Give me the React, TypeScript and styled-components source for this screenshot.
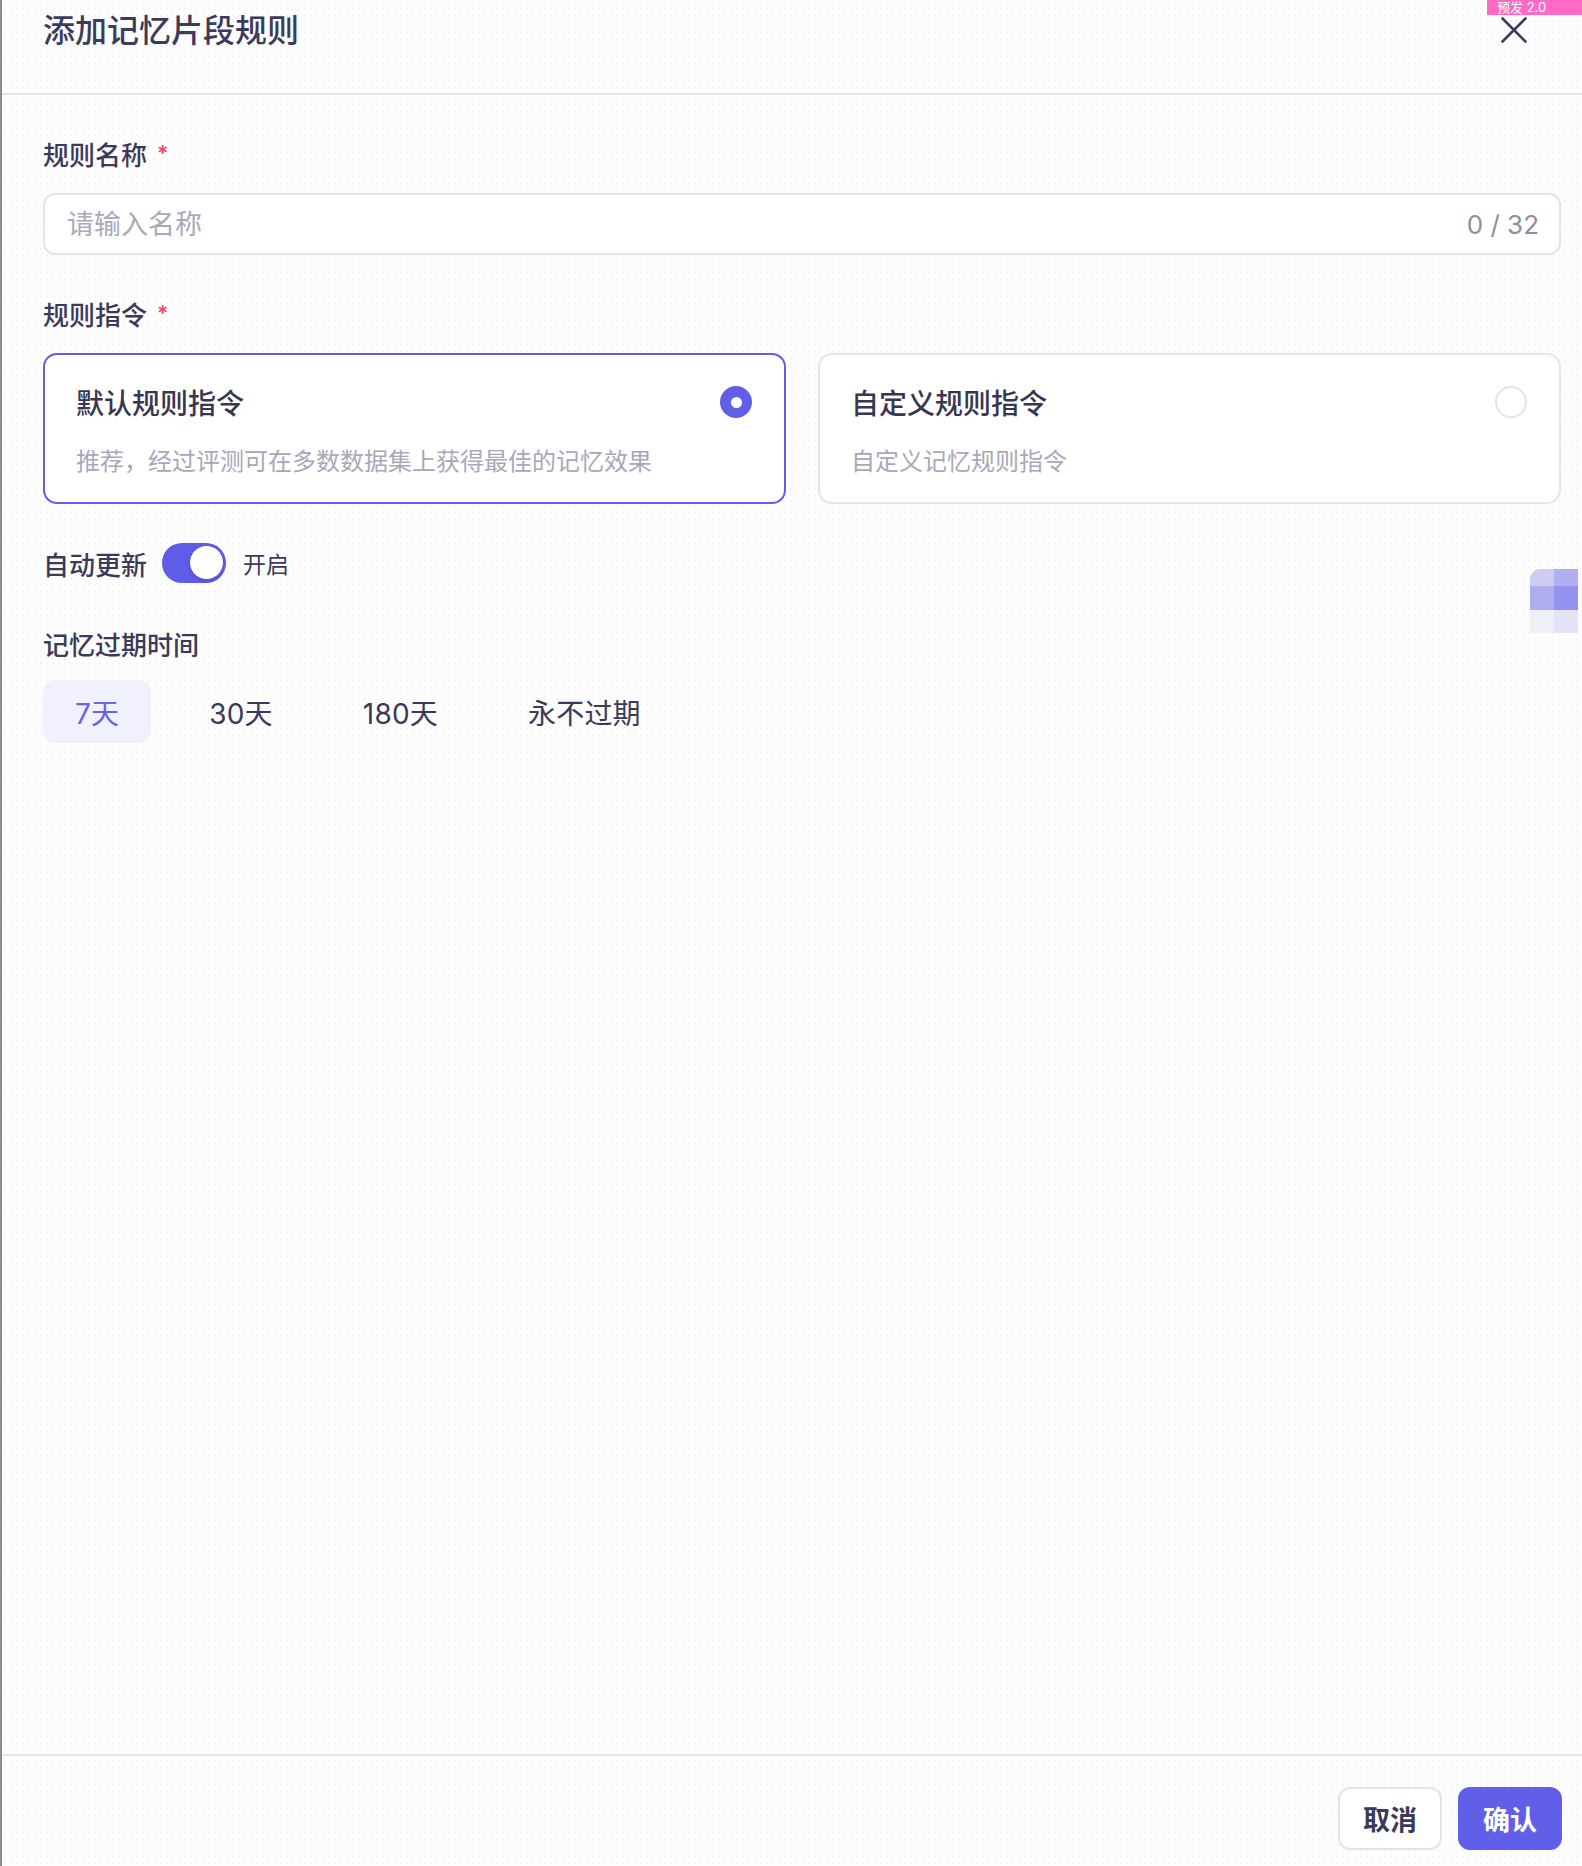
import React, { useState } from 'react';
import styled, { createGlobalStyle } from 'styled-components';

const GlobalStyle = createGlobalStyle`
  html, body {
    margin: 0;
    padding: 0;
    background: #fdfdfe;
  }
  * { box-sizing: border-box; }
  body {
    font-family: "Inter", "Noto Sans CJK SC", sans-serif;
    color: #3b3a58;
  }
`;

const Page = styled.div`
  position: relative;
  width: 1582px;
  height: 1866px;
  display: flex;
  flex-direction: column;
  border-left: 2px solid #8c8b92;
  background-color: #fdfdfe;
  background-image: radial-gradient(#f6f6f9 0.8px, transparent 0.9px);
  background-size: 6px 6px;
  overflow: hidden;
`;

const Header = styled.div`
  height: 95px;
  display: flex;
  justify-content: space-between;
  align-items: flex-start;
  padding: 13px 48px 0 41px;
  border-bottom: 2px solid #e6e5ee;
`;

const Title = styled.h1`
  margin: 0;
  font-size: 32px;
  line-height: 36px;
  font-weight: 500;
  color: #3d3b5c;
`;

const CloseButton = styled.button`
  width: 40px;
  height: 40px;
  margin-top: -3px;
  padding: 0;
  border: none;
  background: transparent;
  display: flex;
  align-items: center;
  justify-content: center;
  color: #3d3b5c;
  cursor: pointer;
`;

const EnvBadge = styled.div`
  position: absolute;
  top: 0;
  right: 0;
  width: 95px;
  height: 15px;
  background: #ff6ac6;
  color: #fff;
  font-size: 13px;
  line-height: 15px;
  padding-left: 10px;
  white-space: nowrap;
`;

const Body = styled.div`
  flex: 1;
  padding: 43px 21px 0 41px;
  display: flex;
  flex-direction: column;
`;

const Field = styled.div`
  margin-bottom: 43px;
`;

const Label = styled.div`
  font-size: 26px;
  line-height: 36px;
  font-weight: 500;
  color: #3b3a58;
  margin-bottom: 19px;
  display: flex;
  align-items: center;
`;

const Required = styled.span`
  color: #f5455c;
  font-size: 22px;
  margin-left: 10px;
  margin-top: -6px;
`;

const InputBox = styled.div`
  height: 62px;
  border: 2px solid #e4e3ec;
  border-radius: 12px;
  background: #fff;
  display: flex;
  align-items: center;
  padding: 0 20px 0 20px;
`;

const TextInput = styled.input`
  flex: 1;
  border: none;
  outline: none;
  background: transparent;
  font-family: "Inter", "Noto Sans CJK SC", sans-serif;
  font-size: 27px;
  color: #3b3a58;
  &::placeholder {
    color: #aaa8bb;
  }
`;

const Counter = styled.span`
  font-size: 26px;
  color: #8f8da2;
`;

const CardGrid = styled.div`
  display: grid;
  grid-template-columns: 1fr 1fr;
  gap: 32px;
`;

const Card = styled.div<{ $active?: boolean }>`
  height: 151px;
  border: 2px solid ${p => (p.$active ? '#615ee8' : '#e6e5ee')};
  border-radius: 14px;
  background: #fff;
  padding: 27px 32px 0 31px;
  cursor: pointer;
`;

const CardHead = styled.div`
  display: flex;
  justify-content: space-between;
  align-items: center;
  height: 40px;
`;

const CardTitle = styled.div`
  font-size: 28px;
  font-weight: 500;
  color: #383651;
`;

const Radio = styled.span<{ $checked?: boolean }>`
  width: 32px;
  height: 32px;
  border-radius: 50%;
  border: 2px solid ${p => (p.$checked ? '#615ee8' : '#e4e3ec')};
  background: ${p => (p.$checked ? '#615ee8' : '#fff')};
  display: flex;
  align-items: center;
  justify-content: center;
  &::after {
    content: '';
    display: ${p => (p.$checked ? 'block' : 'none')};
    width: 11px;
    height: 11px;
    border-radius: 50%;
    background: #fff;
  }
`;

const CardDesc = styled.div`
  margin-top: 25px;
  font-size: 24px;
  line-height: 30px;
  color: #a9a7b9;
`;

const SwitchRow = styled.div`
  display: flex;
  align-items: center;
  margin-bottom: 45px;
  margin-top: -4px;
`;

const SwitchLabel = styled.span`
  font-size: 26px;
  font-weight: 500;
  color: #3b3a58;
  margin-right: 15px;
`;

const Switch = styled.button<{ $on: boolean }>`
  position: relative;
  width: 64px;
  height: 40px;
  border-radius: 20px;
  border: none;
  padding: 0;
  background: ${p => (p.$on ? '#5f5ce6' : '#d9d8e3')};
  cursor: pointer;
  &::after {
    content: '';
    position: absolute;
    top: 3px;
    left: ${p => (p.$on ? '28px' : '3px')};
    width: 33px;
    height: 33px;
    border-radius: 50%;
    background: #fff;
    box-shadow: 0 2px 4px rgba(40, 40, 90, 0.2);
  }
`;

const SwitchText = styled.span`
  margin-left: 17px;
  font-size: 23px;
  color: #3b3a58;
`;

const Segments = styled.div`
  display: flex;
  gap: 26px;
  margin-top: -3px;
`;

const Segment = styled.button<{ $active?: boolean }>`
  height: 63px;
  padding: 0 32px;
  border: none;
  border-radius: 12px;
  background: ${p => (p.$active ? '#f1f0fd' : 'transparent')};
  color: ${p => (p.$active ? '#6764ea' : '#3b3a58')};
  font-family: "Inter", "Noto Sans CJK SC", sans-serif;
  font-size: 28px;
  letter-spacing: 0.2px;
  cursor: pointer;
`;

const Footer = styled.div`
  height: 112px;
  border-top: 2px solid #e6e5ee;
  display: flex;
  justify-content: flex-end;
  gap: 16px;
  padding: 31px 20px 0 0;
`;

const Button = styled.button<{ $primary?: boolean }>`
  width: 104px;
  height: 63px;
  border-radius: 12px;
  border: 2px solid ${p => (p.$primary ? '#615ee8' : '#e4e3ec')};
  background: ${p => (p.$primary ? '#615ee8' : '#fff')};
  color: ${p => (p.$primary ? '#fff' : '#3b3a58')};
  font-family: "Inter", "Noto Sans CJK SC", sans-serif;
  font-size: 27px;
  font-weight: 600;
  cursor: pointer;
`;

// pixelated floating helper on the right edge
const Mosaic = styled.div`
  position: absolute;
  top: 569px;
  right: 4px;
  width: 48px;
  height: 64px;
  display: grid;
  grid-template-columns: 24px 24px;
  grid-template-rows: 17px 24px 23px;
  border-top-left-radius: 10px;
  overflow: hidden;
`;

const Cell = styled.div<{ $c: string }>`
  background: ${p => p.$c};
`;

const mosaicColors = ['#cdccf5', '#b1aff1', '#aeadf0', '#9593ee', '#efeff8', '#e4e3f7'];

const options = [
  { key: 'default', title: '默认规则指令', desc: '推荐，经过评测可在多数数据集上获得最佳的记忆效果' },
  { key: 'custom', title: '自定义规则指令', desc: '自定义记忆规则指令' },
];

const expiries = ['7天', '30天', '180天', '永不过期'];

export default function App() {
  const [name, setName] = useState('');
  const [rule, setRule] = useState('default');
  const [autoUpdate, setAutoUpdate] = useState(true);
  const [expiry, setExpiry] = useState('7天');

  return (
    <>
      <GlobalStyle />
      <Page>
        <EnvBadge>预发 2.0</EnvBadge>
        <Header>
          <Title>添加记忆片段规则</Title>
          <CloseButton aria-label="close">
            <svg width="26" height="26" viewBox="0 0 26 26" fill="none">
              <path d="M1.5 1.5L24.5 24.5M24.5 1.5L1.5 24.5" stroke="currentColor" strokeWidth="2.6" strokeLinecap="round" />
            </svg>
          </CloseButton>
        </Header>

        <Body>
          <Field>
            <Label>规则名称<Required>*</Required></Label>
            <InputBox>
              <TextInput
                placeholder="请输入名称"
                maxLength={32}
                value={name}
                onChange={e => setName(e.target.value)}
              />
              <Counter>{name.length} / 32</Counter>
            </InputBox>
          </Field>

          <Field>
            <Label>规则指令<Required>*</Required></Label>
            <CardGrid>
              {options.map(o => (
                <Card key={o.key} $active={rule === o.key} onClick={() => setRule(o.key)}>
                  <CardHead>
                    <CardTitle>{o.title}</CardTitle>
                    <Radio $checked={rule === o.key} />
                  </CardHead>
                  <CardDesc>{o.desc}</CardDesc>
                </Card>
              ))}
            </CardGrid>
          </Field>

          <SwitchRow>
            <SwitchLabel>自动更新</SwitchLabel>
            <Switch $on={autoUpdate} onClick={() => setAutoUpdate(v => !v)} />
            <SwitchText>{autoUpdate ? '开启' : '关闭'}</SwitchText>
          </SwitchRow>

          <Field>
            <Label>记忆过期时间</Label>
            <Segments>
              {expiries.map(e => (
                <Segment key={e} $active={expiry === e} onClick={() => setExpiry(e)}>
                  {e}
                </Segment>
              ))}
            </Segments>
          </Field>
        </Body>

        <Footer>
          <Button>取消</Button>
          <Button $primary>确认</Button>
        </Footer>

        <Mosaic>
          {mosaicColors.map((c, i) => (
            <Cell key={i} $c={c} />
          ))}
        </Mosaic>
      </Page>
    </>
  );
}
